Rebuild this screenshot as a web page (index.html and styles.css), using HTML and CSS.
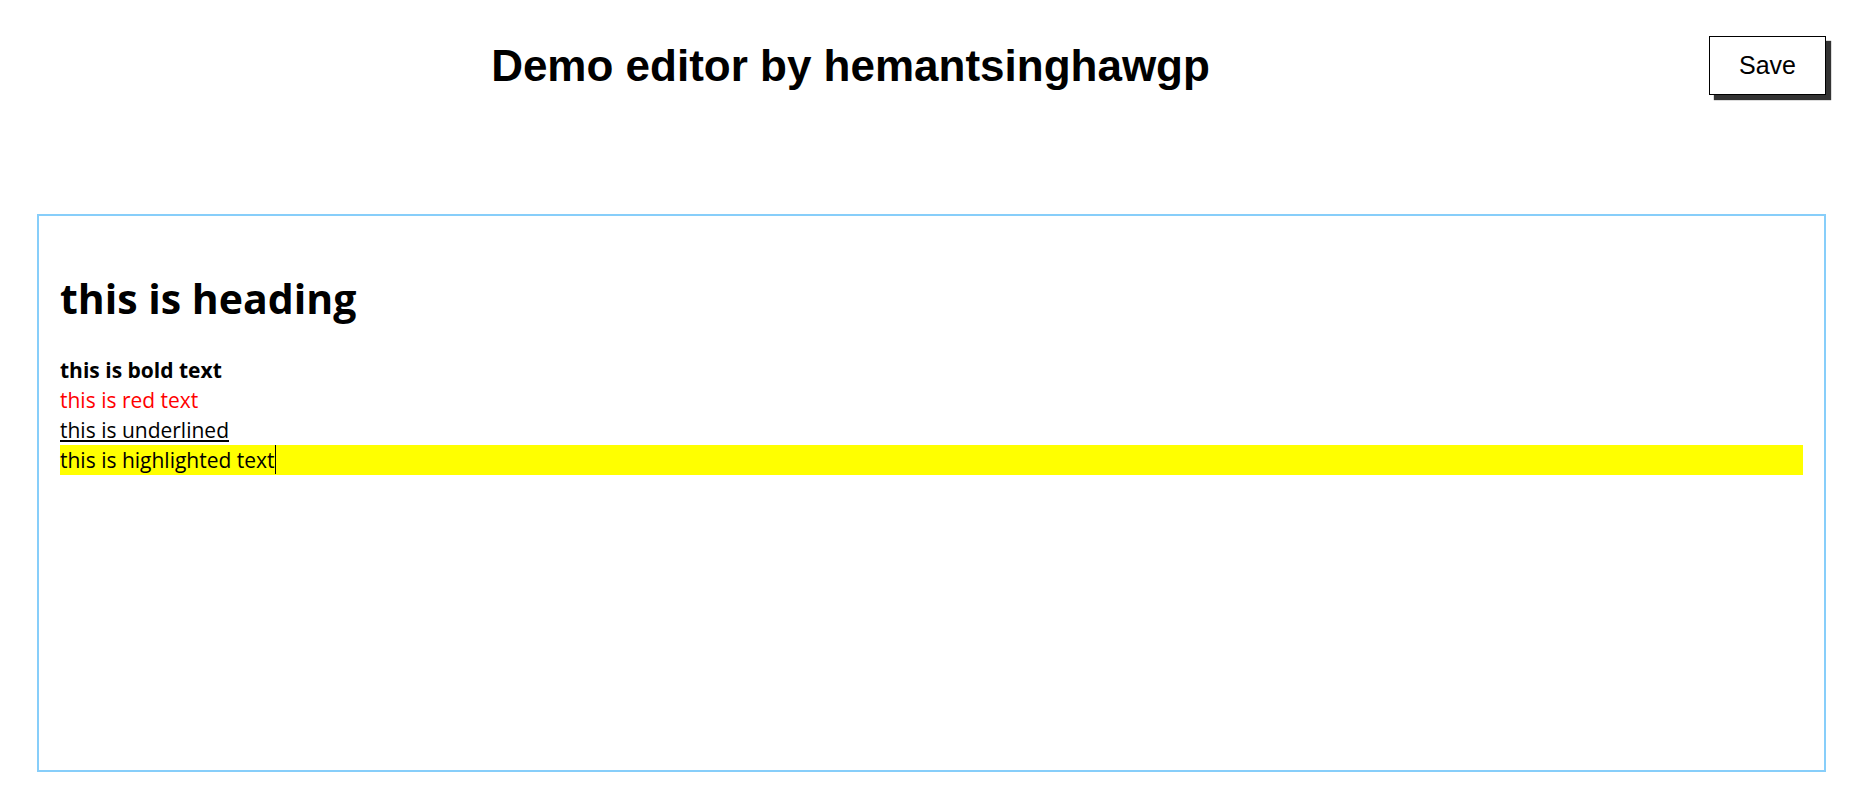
FILE: index.html
```html
<!DOCTYPE html>
<html lang="en">
<head>
<meta charset="utf-8">
<title>Demo editor</title>
<link rel="stylesheet" href="styles.css">
</head>
<body>
<header class="topbar">
  <h1 class="title">Demo editor by hemantsinghawgp</h1>
  <button class="save-btn" type="button">Save</button>
</header>
<main class="editor-wrap">
  <div class="editor" contenteditable="true">
    <h1 class="doc-heading">this is heading</h1>
    <div class="line bold">this is bold text</div>
    <div class="line red">this is red text</div>
    <div class="line"><span class="underline">this is underlined</span></div>
    <div class="line highlight">this is highlighted text<span class="caret"></span></div>
  </div>
</main>
</body>
</html>
```
FILE: styles.css
```css
html, body {
  margin: 0;
  padding: 0;
  background: #ffffff;
}

.topbar {
  display: flex;
  align-items: flex-start;
  padding-top: 36px;
}

.title {
  flex: 1;
  margin: 4px 0 0 0;
  text-align: center;
  font-family: "Liberation Sans", Arial, sans-serif;
  font-weight: bold;
  font-size: 44px;
  line-height: 52px;
  color: #000;
}

.save-btn {
  width: 117px;
  height: 59px;
  margin: 0 28px 0 8px;
  padding: 0;
  background: #fff;
  border: 1px solid #000;
  box-shadow: 5px 5px 1px #333;
  font-family: "Liberation Sans", Arial, sans-serif;
  font-size: 25px;
  color: #000;
}

.editor-wrap {
  padding: 119px 0 0 37px;
}

.editor {
  box-sizing: border-box;
  width: 1789px;
  height: 558px;
  border: 2px solid #87cefa;
  padding: 21px;
  font-family: "Open Sans", "Noto Sans", sans-serif;
  font-size: 21px;
  line-height: 30px;
  color: #000;
  outline: none;
}

.doc-heading {
  margin: 35px 0 31px 0;
  font-size: 41px;
  line-height: 52px;
  font-weight: bold;
}

.line {
  height: 30px;
  white-space: nowrap;
}

.bold {
  font-weight: bold;
}

.red {
  color: #ff0000;
}

.underline {
  text-decoration: underline;
}

.highlight {
  background: #ffff00;
}

.caret {
  display: inline-block;
  width: 1px;
  height: 29px;
  background: #000;
  vertical-align: top;
}
```
